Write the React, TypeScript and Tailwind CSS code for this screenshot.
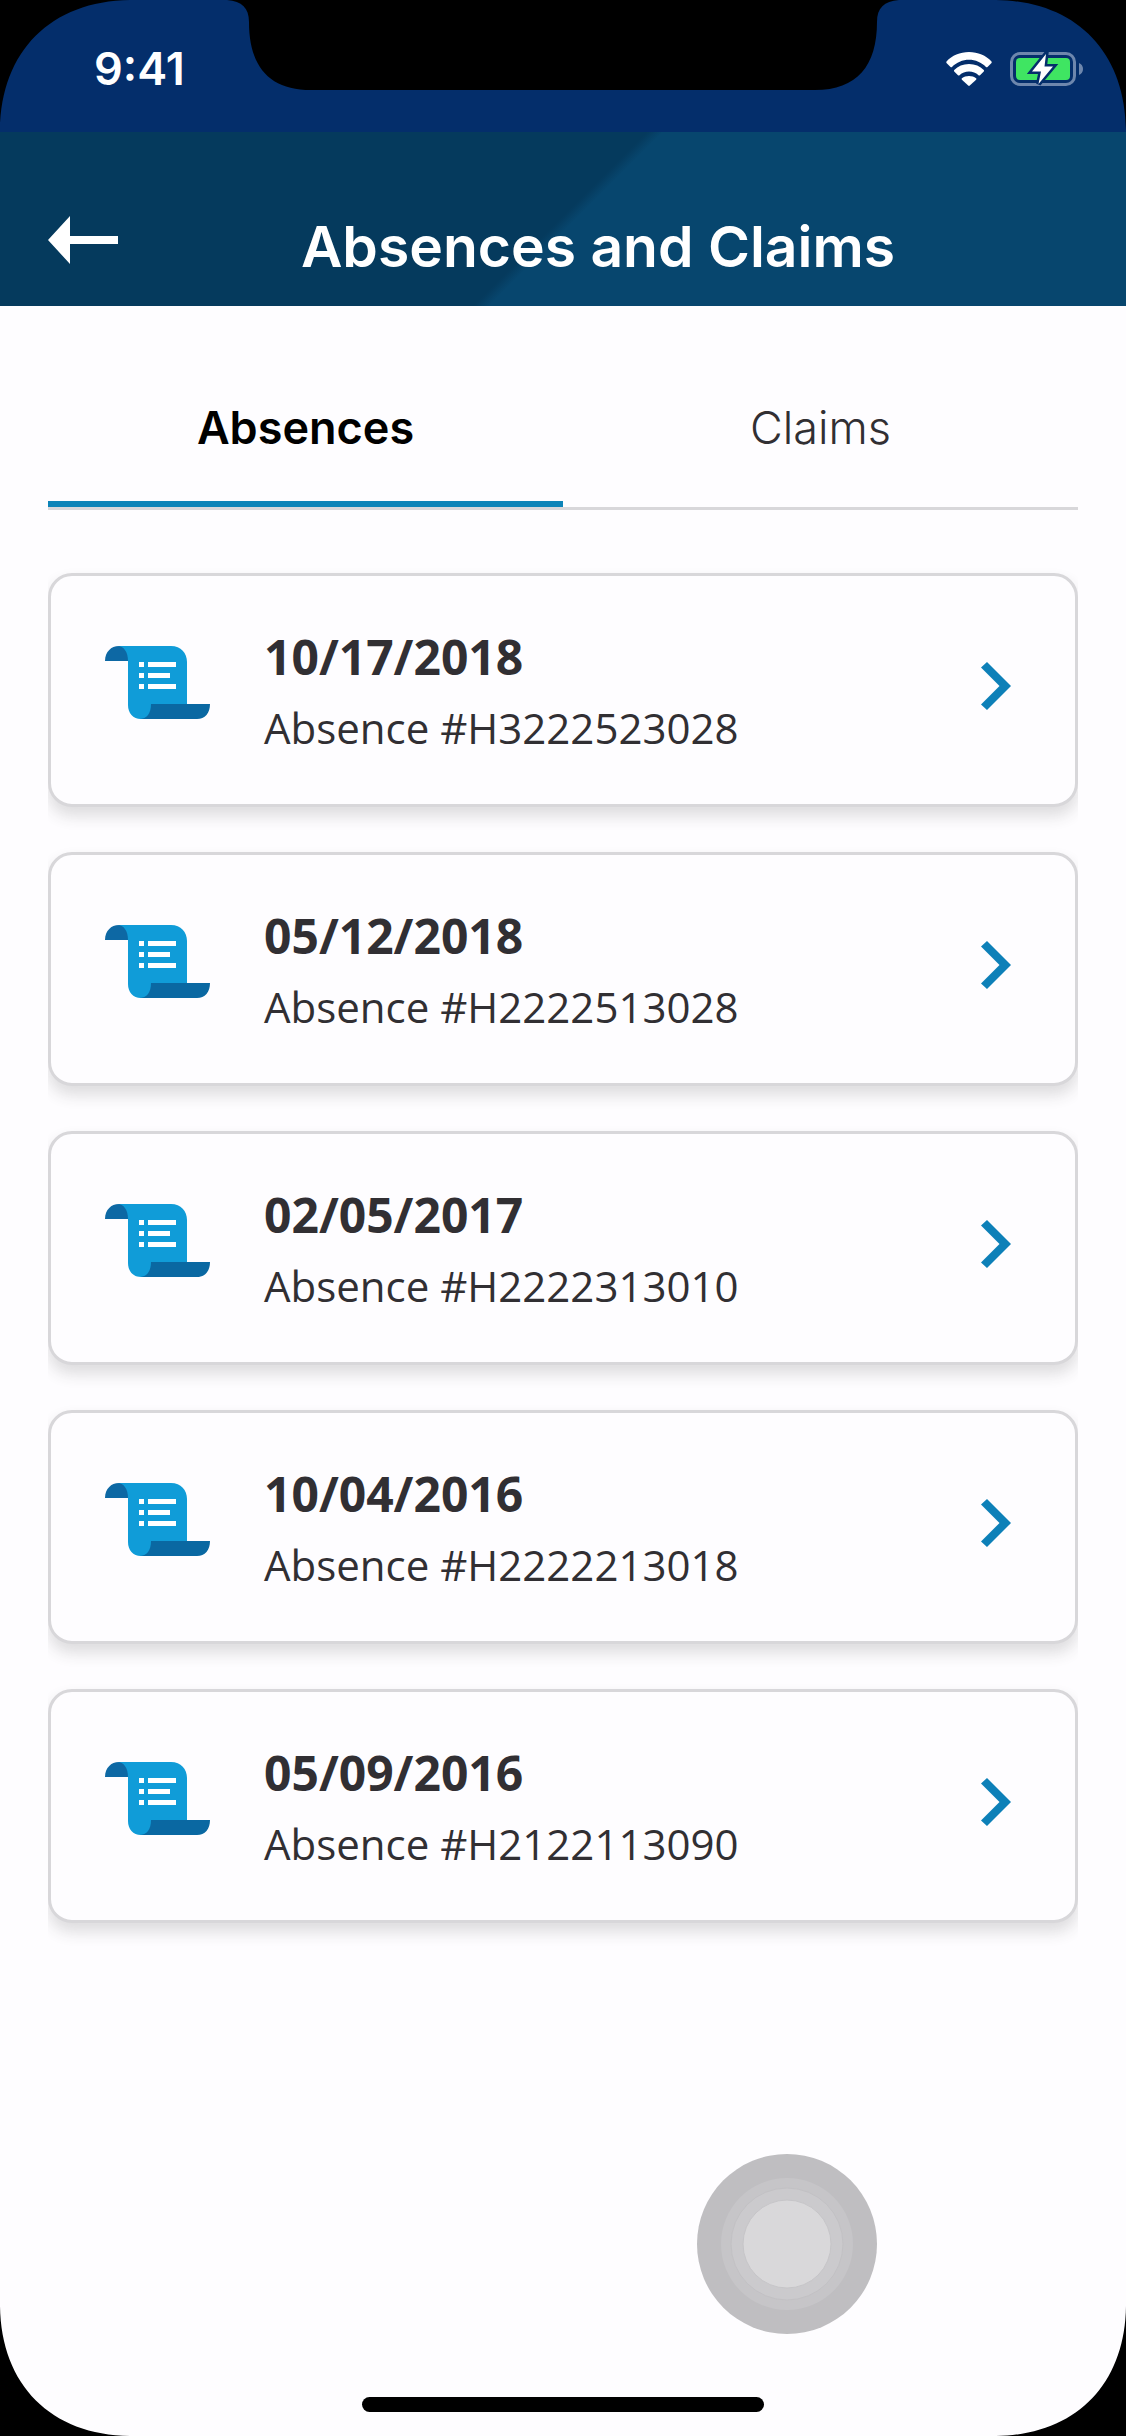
import { useState } from "react";

const records = [
  { date: "10/17/2018", id: "H3222523028" },
  { date: "05/12/2018", id: "H2222513028" },
  { date: "02/05/2017", id: "H2222313010" },
  { date: "10/04/2016", id: "H2222213018" },
  { date: "05/09/2016", id: "H2122113090" },
];

function ScrollIcon() {
  return (
    <svg className="mt-[26px] h-[73px] w-[105px] shrink-0" viewBox="0 0 105 73" aria-hidden="true">
      <path d="M0 15C0 6 6 0 14 0h12v15z" fill="#0d68a4" />
      <path d="M12 0h54c10 0 16 7 16 16v42L46 73H36c-8 0-13-6-13-14V15C23 6 19 0 12 0z" fill="#109cd8" />
      <path d="M46 58h59c0 9-5 15-13 15H34c8 0 12-6 12-15z" fill="#0a68a2" />
      <path
        d="M34 16h5v5h-5zM43 16h28v5H43zM34 27h5v5h-5zM43 27h22v5H43zM34 38h5v5h-5zM43 38h28v5H43z"
        fill="#fff"
      />
    </svg>
  );
}

function Corner({ className }: { className: string }) {
  return (
    <svg className={`pointer-events-none absolute h-[130px] w-[130px] ${className}`} viewBox="0 0 130 130" aria-hidden="true">
      <path d="M0 0H130C51 1 1 51 0 130Z" fill="#000" />
    </svg>
  );
}

function StatusBar() {
  return (
    <div className="relative flex h-33 items-start justify-between bg-[#042e6b] pt-[39px] pr-[43px] pl-[94px]">
      <span className="font-['Inter',sans-serif] text-[45px] leading-[60px] font-semibold text-white">9:41</span>
      <svg
        className="absolute top-0 left-1/2 h-[90px] w-[672px] -translate-x-1/2"
        viewBox="0 0 672 90"
        aria-hidden="true"
      >
        <path
          d="M0 0C15 1 22 8 22 22C22 66 42 90 84 90H588C630 90 650 66 650 22C650 8 657 1 672 0Z"
          fill="#000"
        />
      </svg>
      <div className="flex gap-[18px] pt-[13px]">
        <svg className="h-[34px] w-[46px]" viewBox="0 0 46 34" fill="#fff" aria-hidden="true">
          <path d="M23 0C32 0 40 3.500 45.500 9.500Q46 10.200 45.500 11L41.500 15Q40.700 15.600 40 15C35.500 10.500 29.500 7.800 23 7.800S10.500 10.500 6 15Q5.300 15.600 4.500 15L.5 11Q0 10.200.5 9.500C6 3.500 14 0 23 0Z" />
          <path d="M23 12C29 12 34 14.200 37.800 18Q38.300 18.700 37.800 19.400L34 23.200Q33.200 23.800 32.500 23.200C29.900 20.900 26.700 19.600 23 19.600S16.100 20.900 13.500 23.200Q12.800 23.800 12 23.200L8.200 19.400Q7.700 18.700 8.200 18C12 14.200 17 12 23 12Z" />
          <path d="M23 24C25.800 24 28.200 24.900 30.100 26.300Q30.700 27 30.100 27.700L23.800 33.600Q23 34.200 22.200 33.600L15.900 27.700Q15.300 27 15.900 26.300C17.800 24.900 20.200 24 23 24Z" />
        </svg>
        <svg className="h-[34px] w-[73px]" viewBox="0 0 73 34" aria-hidden="true">
          <rect x="1.500" y="1.500" width="63" height="31" rx="8.500" fill="none" stroke="#6e87ad" strokeWidth="3" />
          <path d="M69 11C71.500 12 73 14.300 73 17S71.500 22 69 23Z" fill="#6e87ad" />
          <rect x="6" y="6" width="54" height="22" rx="4" fill="#3fe562" />
          <path
            d="M36 2L22 19.500H31L28.500 32L43 14.500H34.500Z"
            fill="#fff"
            stroke="#042e6b"
            strokeWidth="5"
            paintOrder="stroke"
          />
        </svg>
      </div>
      <Corner className="top-0 left-0" />
      <Corner className="top-0 right-0 rotate-90" />
    </div>
  );
}

export default function App() {
  const [tab, setTab] = useState("Absences");

  return (
    <div className="relative flex min-h-screen flex-col overflow-hidden bg-[#fefdff] text-[#312f33]">
      <StatusBar />

      <header className="flex h-[174px] items-start bg-[linear-gradient(135deg,#053a5d_49.8%,#07466e_51%)] px-12">
        <button type="button" aria-label="Back" className="mt-21 shrink-0">
          <svg className="h-12 w-[70px]" viewBox="0 0 70 48" fill="#fff" aria-hidden="true">
            <path d="M0 24L22 0V20H70V28H22V48Z" />
          </svg>
        </button>
        <h1 className="mt-[79px] flex-1 text-center font-['Inter',sans-serif] text-[57px] leading-[72px] font-semibold text-white">
          Absences and Claims
        </h1>
      </header>

      <main className="px-12">
        <div role="tablist" className="grid h-51 grid-cols-2 border-b-3 border-[#d8d7da] pt-22 font-['Inter',sans-serif]">
          {["Absences", "Claims"].map((name) => (
            <button
              key={name}
              type="button"
              role="tab"
              aria-selected={tab === name}
              onClick={() => setTab(name)}
              className={`flex items-start justify-center border-b-6 pt-1 text-[45px] leading-[60px] ${
                tab === name ? "border-[#0d84b8] font-semibold text-black" : "border-transparent font-light"
              }`}
            >
              {name}
            </button>
          ))}
        </div>

        <ul className="mt-[38px] flex flex-col gap-[15px] overflow-hidden pt-[25px] pb-[30px]">
          {records.map((r) => (
            <li key={r.id} className="pb-[30px]">
              <a
                href={`#${r.id}`}
                className="flex items-start rounded-3xl border-3 border-[#d8d7da] bg-[#fefdff] pt-11 pr-16 pb-[42px] pl-[54px] font-['Open_Sans',sans-serif] shadow-[0_9px_15px_rgba(49,47,51,0.16)]"
              >
                <ScrollIcon />
                <span className="ml-[54px] flex-1">
                  <span className="block text-[48px] leading-[74px] font-bold">{r.date}</span>
                  <span className="block text-[42px] leading-[68px]">Absence #{r.id}</span>
                </span>
                <svg className="mt-[42px] h-12 w-[30px] shrink-0" viewBox="0 0 30 48" aria-hidden="true">
                  <path d="M0 5.500L6 0L30 24L6 48L0 42.500L18.500 24Z" fill="#0d80b8" />
                </svg>
              </a>
            </li>
          ))}
        </ul>
      </main>

      <svg
        className="pointer-events-none absolute bottom-[102px] left-[697px] h-[180px] w-[180px]"
        viewBox="0 0 180 180"
        aria-hidden="true"
      >
        <circle cx="90" cy="90" r="90" fill="#bfbec1" />
        <circle cx="90" cy="90" r="66" fill="#c6c5c8" />
        <circle cx="90" cy="90" r="56" fill="#cbcacd" stroke="#c2c1c4" />
        <circle cx="90" cy="90" r="44" fill="#d9d8da" stroke="#c6c5c8" />
      </svg>

      <div className="mx-auto mt-auto mb-6 h-[15px] w-[402px] shrink-0 rounded-full bg-black" />

      <Corner className="bottom-0 left-0 -rotate-90" />
      <Corner className="right-0 bottom-0 rotate-180" />
    </div>
  );
}
